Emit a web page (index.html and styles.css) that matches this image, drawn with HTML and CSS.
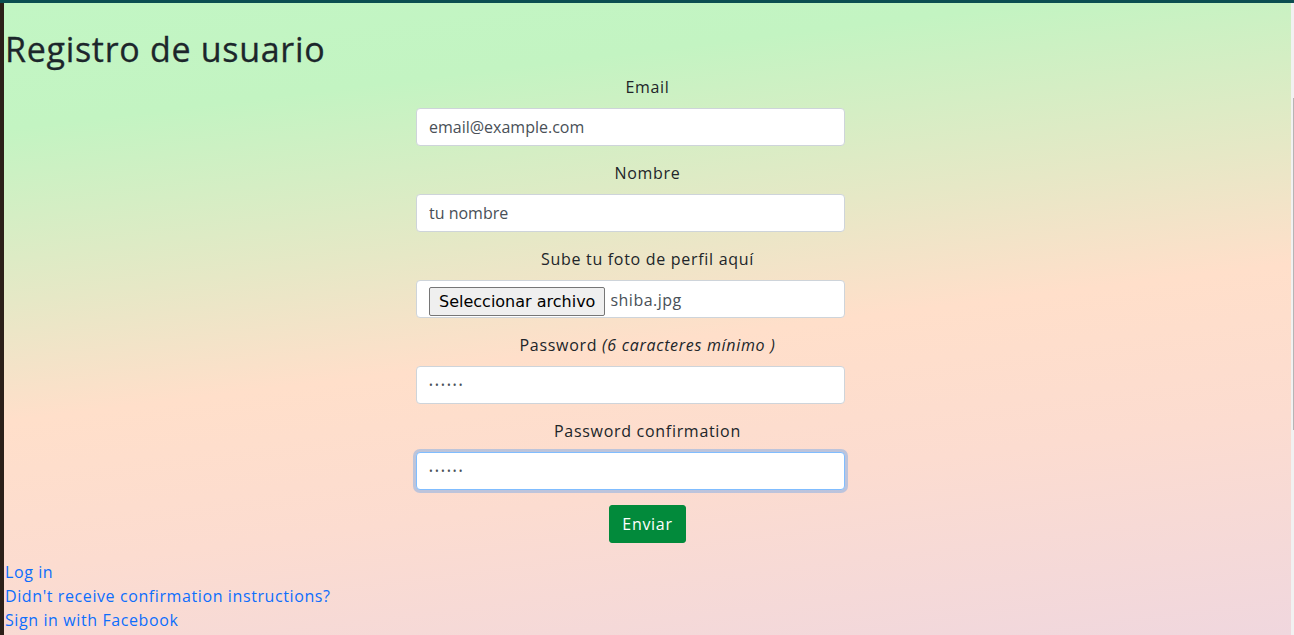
FILE: index.html
```html
<!DOCTYPE html>
<html lang="es">
<head>
<meta charset="utf-8">
<title>Registro de usuario</title>
<link rel="stylesheet" href="styles.css">
</head>
<body>
<div class="topbar"></div>
<div class="frame">
  <div class="edge"></div>
  <main class="main">
    <h1 class="title">Registro de usuario</h1>
    <form class="form">
      <div class="group">
        <label class="label">Email</label>
        <input class="field" type="text" value="email@example.com">
      </div>
      <div class="group">
        <label class="label">Nombre</label>
        <input class="field" type="text" value="tu nombre">
      </div>
      <div class="group">
        <label class="label">Sube tu foto de perfil aquí</label>
        <div class="field file">
          <button type="button" class="file-btn">Seleccionar archivo</button>
          <span class="file-name">shiba.jpg</span>
        </div>
      </div>
      <div class="group">
        <label class="label">Password <em>(6 caracteres mínimo )</em></label>
        <div class="field pw">••••••</div>
      </div>
      <div class="group">
        <label class="label">Password confirmation</label>
        <div class="field pw focus">••••••</div>
      </div>
      <div class="actions">
        <button type="button" class="submit">Enviar</button>
      </div>
    </form>
    <nav class="links">
      <a href="#">Log in</a>
      <a href="#">Didn't receive confirmation instructions?</a>
      <a href="#">Sign in with Facebook</a>
    </nav>
  </main>
  <div class="scroll"><div class="thumb"></div></div>
</div>
</body>
</html>
```
FILE: styles.css
```css
html, body {
  margin: 0;
  padding: 0;
}
body {
  background: #2b2019;
  font-family: "Open Sans", Lato, sans-serif;
  color: #212529;
  overflow: hidden;
}
.topbar {
  height: 3px;
  background: #0b4e51;
}
.frame {
  display: flex;
  height: 632px;
}
.edge {
  width: 4px;
  background: #2b2019;
}
.main {
  flex: 1;
  background: linear-gradient(173deg, #c2f6c4 0%, #c3f4c2 16%, #e6e8c6 38%, #ffdfca 53%, #fcdcd0 72%, #f0d7de 100%);
}
.scroll {
  width: 3px;
  background: #f1f1f1;
}
.thumb {
  margin-top: 95px;
  margin-left: 2px;
  width: 1px;
  height: 332px;
  background: #b5b5b5;
}
.title {
  margin: 26px 0 5px 1px;
  font-size: 34px;
  font-weight: 400;
  line-height: 41px;
  letter-spacing: 0.7px;
  color: #1c262b;
  -webkit-text-stroke: 0.3px #1c262b;
}
.form {
  width: 463px;
  margin: 0 auto;
}
.group {
  display: flex;
  flex-direction: column;
  margin-bottom: 15px;
}
.label {
  text-align: center;
  font-size: 16px;
  line-height: 24px;
  letter-spacing: 0.7px;
  margin-bottom: 9px;
  color: #212529;
}
.label em {
  font-style: italic;
}
.field {
  box-sizing: border-box;
  width: 429px;
  height: 38px;
  padding: 6px 12px;
  border: 1px solid #ced4da;
  border-radius: 4px;
  background: #fff;
  font-family: inherit;
  font-size: 16px;
  color: #495057;
  outline: none;
}
.file {
  display: flex;
  align-items: center;
  gap: 5px;
  padding: 0 12px;
}
.file-btn {
  font-family: "DejaVu Sans", sans-serif;
  font-size: 16px;
  height: 29px;
  margin-top: 6px;
  padding: 0 9px;
  background: #efefef;
  border: 1px solid #767676;
  border-radius: 2px;
  color: #000;
  align-self: flex-start;
}
.file-name {
  font-size: 16px;
  letter-spacing: 0.5px;
  color: #495057;
  padding-top: 2px;
}
.pw {
  font-size: 10px;
  letter-spacing: 2.2px;
  line-height: 26px;
  padding-top: 5px;
  color: #495057;
}
.focus {
  border-color: #80bdff;
  box-shadow: 0 0 0 3px rgba(0, 123, 255, 0.25);
}
.actions {
  display: flex;
  justify-content: center;
  margin-top: 2px;
}
.submit {
  font-family: inherit;
  font-size: 16px;
  letter-spacing: 0.7px;
  color: #fff;
  background: #028a3b;
  border: 1px solid #028a3b;
  border-radius: 3px;
  height: 38px;
  padding: 0 12px;
}
.links {
  display: flex;
  flex-direction: column;
  align-items: flex-start;
  margin-top: 17px;
  margin-left: 1px;
}
.links a {
  color: #0d6efd;
  text-decoration: none;
  font-size: 16px;
  line-height: 24px;
  letter-spacing: 0.6px;
}
```
